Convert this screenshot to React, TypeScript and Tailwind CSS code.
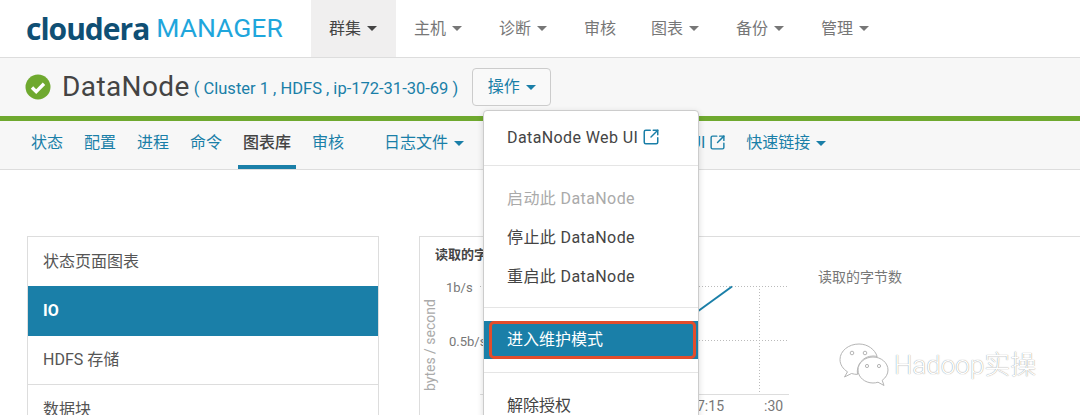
import React from 'react';
import { SquareArrowOutUpRight } from 'lucide-react';

const Caret = ({ className = 'border-t-[#555]' }: { className?: string }) => (
  <span className={`ml-[6px] inline-block h-0 w-0 border-x-[5px] border-t-[5px] border-x-transparent ${className}`} />
);

const navItems = [
  { label: '群集', caret: true, active: true },
  { label: '主机', caret: true },
  { label: '诊断', caret: true },
  { label: '审核' },
  { label: '图表', caret: true },
  { label: '备份', caret: true },
  { label: '管理', caret: true },
];

const tabs = ['状态', '配置', '进程', '命令', '图表库', '审核'];

const CheckIcon = () => (
  <svg width="26" height="26" viewBox="0 0 26 26">
    <circle cx="13" cy="13" r="12.5" fill="#6fa92f" />
    <path d="M7 13.5l4.2 4.2L19 9.8" fill="none" stroke="#fff" strokeWidth="3.4" />
  </svg>
);

const WeChat = () => (
  <svg width="50" height="44" viewBox="0 0 50 44" fill="#fff" stroke="#b5b5b5" strokeWidth="1">
    <path d="M20 1C9.500 1 1 8 1 16.500c0 5 3 9.500 7.500 12.300L5.500 34l7-3.500c2 .6 4 .9 6 .9 C17 22 24 13 34 13c1.500 0 3 .2 4.200 .6C36 6.500 28.800 1 20 1z" />
    <path d="M49 27c0-7.200-6.800-13-15-13s-15 5.800-15 13 6.800 13 15 13c1.800 0 3.500-.3 5-.8l6 3.300-1.800-5.200C46.800 34.800 49 31 49 27z" />
    <circle cx="13" cy="10" r="1.800" />
    <circle cx="26" cy="10" r="1.800" />
    <circle cx="28" cy="23" r="1.600" />
    <circle cx="40" cy="23" r="1.600" />
  </svg>
);

const App: React.FC = () => {
  return (
    <div className="relative h-[415px] w-[1080px] overflow-hidden bg-white font-['Roboto','Noto_Sans_CJK_SC',sans-serif] text-[16px]">
      {/* top nav */}
      <div className="flex h-[58px] items-stretch border-b border-[#ddd]">
        <div className="flex w-[311px] items-center pl-[26px]">
          <span className="font-['Open_Sans',sans-serif] text-[30px] leading-none font-bold tracking-[-1px] text-[#0f4f74]">cloudera</span>
          <span className="ml-[7px] text-[26.5px] leading-none text-[#1fa6dc]">MANAGER</span>
        </div>
        {navItems.map((item) => (
          <div
            key={item.label}
            className={`flex items-center pl-[18px] ${item.caret ? 'w-[85px]' : 'w-[67px]'} ${item.active ? 'bg-[#f0efef] text-[#444]' : 'text-[#777]'}`}
          >
            {item.label}
            {item.caret && <Caret className={item.active ? 'border-t-[#444]' : 'border-t-[#777]'} />}
          </div>
        ))}
      </div>

      {/* title row */}
      <div className="flex h-[58px] items-center bg-[#f7f7f7] pl-[25px]">
        <CheckIcon />
        <span className="ml-[11px] text-[28px] tracking-[0.4px] text-[#444]">DataNode</span>
        <span className="ml-[4px] mt-[4px] text-[16.500px] text-[#1a7fa8]">( Cluster 1 , HDFS , ip-172-31-30-69 )</span>
        <button className="ml-[14px] flex h-[38px] w-[79px] items-center justify-center rounded-[4px] border border-[#ccc] bg-[#f9f9f9] text-[#1a7fa8]">
          操作
          <Caret className="border-t-[#1a7fa8]" />
        </button>
      </div>

      {/* tabs */}
      <div className="flex h-[54px] items-stretch border-t-[5px] border-b border-t-[#6fa92f] border-b-[#ddd] bg-[#f7f7f7] pl-[31px] text-[#1a7fa8]">
        {tabs.map((tab) => (
          <div
            key={tab}
            className={`relative mr-[21px] flex items-center pb-[4px] ${tab === '图表库' ? 'font-medium text-[#444]' : ''}`}
          >
            {tab}
            {tab === '图表库' && <span className="absolute right-[-5px] bottom-0 left-[-5px] h-[4px] bg-[#1a7fa8]" />}
          </div>
        ))}
        <div className="ml-[19px] flex items-center pb-[4px]">
          日志文件
          <Caret className="border-t-[#1a7fa8]" />
        </div>
        <div className="ml-[191px] flex items-center pb-[4px]">
          Web UI
          <SquareArrowOutUpRight size={17} strokeWidth={2} className="ml-[4px] mb-[2px]" />
        </div>
        <div className="ml-[20px] flex items-center pb-[4px]">
          快速链接
          <Caret className="border-t-[#1a7fa8]" />
        </div>
      </div>

      {/* body */}
      <div className="flex gap-[40px] pt-[66px] pl-[27px]">
        <div className="w-[352px] shrink-0 border border-[#ddd] text-[#555]">
          <div className="flex h-[49px] items-center px-[15px]">状态页面图表</div>
          <div className="flex h-[50px] items-center bg-[#1a7fa8] px-[15px] font-bold text-white">IO</div>
          <div className="flex h-[49px] items-center border-b border-[#ddd] px-[15px]">HDFS 存储</div>
          <div className="flex h-[49px] items-center px-[15px]">数据块</div>
        </div>
        <div className="relative h-[200px] flex-1 border-t border-l border-[#ddd]">
          <svg width="661" height="179" viewBox="0 0 661 179" className="block">
            <text x="15" y="22" fontSize="13" fontWeight="700" fill="#444">读取的字节数</text>
            <text x="26" y="55" fontSize="13" fill="#777">1b/s</text>
            <text x="29" y="109" fontSize="13" fill="#777">0.5b/s</text>
            <text transform="translate(15 154) rotate(-90)" fontSize="14" fill="#aaa">bytes / second</text>
            <path d="M60 49.500H369M60 103.500H369M339.500 49V158" stroke="#bbb" strokeDasharray="1 2" fill="none" />
            <path d="M60 157.500H369" stroke="#ddd" fill="none" />
            <path d="M270 80L312 49.500" stroke="#1a7fa8" strokeWidth="2" fill="none" />
            <text x="277" y="174" fontSize="14" fill="#777">7:15</text>
            <text x="344" y="174" fontSize="14" fill="#777">:30</text>
            <text x="398" y="45" fontSize="14" fill="#777">读取的字节数</text>
          </svg>
        </div>
      </div>

      {/* dropdown menu */}
      <div className="absolute top-[110px] left-[483px] h-[330px] w-[216px] rounded-[4px] border border-[#ccc] bg-white text-[#444] shadow-[0_2px_6px_rgba(0,0,0,0.15)]">
        <div className="flex h-[55px] items-center border-b border-[#e5e5e5] pl-[23px] tracking-[0.4px]">
          DataNode Web UI
          <SquareArrowOutUpRight size={18} strokeWidth={2} className="mb-[3px] ml-[4px] text-[#1a7fa8]" />
        </div>
        <div className="border-b border-[#e5e5e5] pt-[13px] pb-[11px] tracking-[0.4px]">
          <div className="flex h-[39px] items-center pl-[23px] text-[#aaa]">启动此 DataNode</div>
          <div className="flex h-[39px] items-center pl-[23px]">停止此 DataNode</div>
          <div className="flex h-[39px] items-center pl-[23px]">重启此 DataNode</div>
        </div>
        <div className="border-b border-[#e5e5e5] py-[13px]">
          <div className="bg-[#1a7fa8]">
            <div className="ml-[5px] mr-[2px] flex h-[38px] items-center rounded-[5px] border-[3px] border-[#e34d2b] pl-[15px] text-white">进入维护模式</div>
          </div>
        </div>
        <div className="flex h-[39px] items-center pt-[27px] pl-[23px]">解除授权</div>
      </div>

      {/* watermark */}
      <div className="absolute top-[343px] left-[839px] flex items-center">
        <WeChat />
        <span className="ml-[5px] text-[26px] font-light text-white [text-shadow:0_0_1px_#777]">Hadoop实操</span>
      </div>
    </div>
  );
};

export default App;
